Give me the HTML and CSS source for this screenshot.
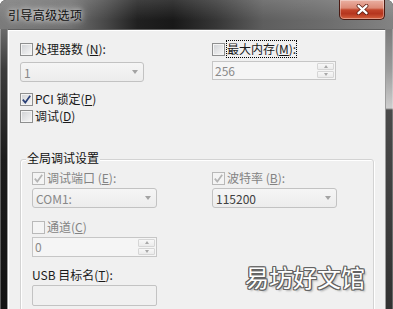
FILE: index.html
```html
<!DOCTYPE html>
<html lang="zh">
<head>
    <meta charset="utf-8">
    <title>引导高级选项</title>
    <link rel="stylesheet" href="styles.css">
</head>
<body>

<div class="window">
    <div class="titlebar">
        <span class="title">引导高级选项</span>
        <div class="close">
            <svg width="13" height="11" viewBox="0 0 13 11">
                <path d="M2.5 1.8 L10.5 9.2 M10.5 1.8 L2.5 9.2" stroke="#5a1c10" stroke-width="3.8" stroke-linecap="round"/>
                <path d="M2.5 1.8 L10.5 9.2 M10.5 1.8 L2.5 9.2" stroke="#fff" stroke-width="2.3" stroke-linecap="round"/>
            </svg>
        </div>
    </div>

    <div class="frame">
        <div class="edge edge-left"></div>

        <div class="client">
            <div class="cols cols-top">
                <div class="col">
                    <div class="check"><span class="box"></span><span>处理器数 (<u>N</u>):</span></div>
                    <div class="combo combo-first"><span>1</span><i class="arrow"></i></div>
                    <div class="check row-pci">
                        <span class="box">
                            <svg width="11" height="11" viewBox="0 0 11 11"><path d="M1.8 5.6 L4.3 8.6 L9.2 1.8" fill="none" stroke="#2b4177" stroke-width="1.7"/></svg>
                        </span>
                        <span>PCI 锁定(<u>P</u>)</span>
                    </div>
                    <div class="check row-debug"><span class="box"></span><span>调试(<u>D</u>)</span></div>
                </div>
                <div class="col">
                    <div class="check"><span class="box"></span><span class="focus">最大内存(<u>M</u>):</span></div>
                    <div class="spin spin-first">
                        <span class="val">256</span>
                        <span class="spin-btns"><b><i class="up"></i></b><b><i class="down"></i></b></span>
                    </div>
                </div>
            </div>

            <div class="group">
                <span class="legend">全局调试设置</span>
                <div class="cols cols-group">
                    <div class="col">
                        <div class="check disabled">
                            <span class="box">
                                <svg width="11" height="11" viewBox="0 0 11 11"><path d="M1.8 5.6 L4.3 8.6 L9.2 1.8" fill="none" stroke="#b4b4b4" stroke-width="1.7"/></svg>
                            </span>
                            <span>调试端口 (<u>E</u>):</span>
                        </div>
                        <div class="combo combo-group"><span>COM1:</span><i class="arrow"></i></div>
                        <div class="check disabled row-chan"><span class="box"></span><span>通道(<u>C</u>)</span></div>
                        <div class="spin spin-group">
                            <span class="val">0</span>
                            <span class="spin-btns"><b><i class="up"></i></b><b><i class="down"></i></b></span>
                        </div>
                        <div class="label row-usb">USB 目标名(<u>T</u>):</div>
                        <div class="textbox"></div>
                    </div>
                    <div class="col">
                        <div class="check disabled">
                            <span class="box">
                                <svg width="11" height="11" viewBox="0 0 11 11"><path d="M1.8 5.6 L4.3 8.6 L9.2 1.8" fill="none" stroke="#b4b4b4" stroke-width="1.7"/></svg>
                            </span>
                            <span>波特率 (<u>B</u>):</span>
                        </div>
                        <div class="combo combo-group combo-dark"><span>115200</span><i class="arrow"></i></div>
                    </div>
                </div>
            </div>
        </div>

        <div class="edge edge-right"></div>
    </div>

    <div class="watermark">易坊好文馆</div>
</div>

</body>
</html>
```

FILE: styles.css
```css
body {
    margin: 0;
    background: #fff;
}
.window {
    position: relative;
    width: 393px;
    height: 309px;
    overflow: hidden;
    display: flex;
    flex-direction: column;
    border-radius: 6px 6px 0 0;
    background: #2a2a2a;
    font-family: "Noto Sans CJK SC", sans-serif;
    font-size: 12px;
    color: #1a1a1a;
}
.titlebar {
    height: 29px;
    flex: none;
    display: flex;
    justify-content: space-between;
    align-items: flex-start;
    background:
        linear-gradient(180deg, rgba(255,255,255,.14), rgba(255,255,255,0) 70%),
        linear-gradient(90deg, #7b7b7b 0%, #6d6d6d 18%, #474747 27%, #202020 35%, #181818 44%, #363636 55%, #5e5e5e 67%, #6e6e6e 84%, #838383 100%);
}
.title {
    margin: 7px 0 0 8px;
    line-height: 16px;
    letter-spacing: 0.4px;
    color: #111;
    text-shadow: 0 0 5px rgba(255,255,255,.85), 0 0 10px rgba(255,255,255,.6), 0 0 14px rgba(255,255,255,.4);
}
.close {
    width: 46px;
    height: 20px;
    margin-right: 8px;
    box-sizing: border-box;
    border: 1px solid #4a1a12;
    border-top: none;
    border-radius: 0 0 5px 5px;
    display: flex;
    align-items: center;
    justify-content: center;
    background: linear-gradient(180deg, #eab0a2 0%, #dc8a76 42%, #c2452b 52%, #b5351e 72%, #d5623f 100%);
    box-shadow: inset 0 0 0 1px rgba(255,255,255,.35);
}
.frame {
    flex: 1;
    display: flex;
}
.edge {
    width: 7px;
    flex: none;
}
.edge-left {
    background: linear-gradient(180deg, #6a6a6a 0, #3c3c3c 40px, #1c1c1c 130px, #111 100%);
    box-shadow: inset 1px 0 0 rgba(255,255,255,.3);
}
.edge-right {
    background: linear-gradient(180deg, #7a7a7a 0, #9a9a9a 40px, #cdcdcd 79px, #4a4a4a 81px, #2e2e2e 100%);
    box-shadow: inset -1px 0 0 rgba(255,255,255,.25);
}
.client {
    flex: 1;
    background: #f0f0f0;
    border: 1px solid #9c9c9c;
    border-top-color: #5e5e5e;
    border-bottom: none;
    box-shadow: inset 1px 1px 0 #fff;
    padding: 11px 0 0 12px;
}
.cols {
    display: grid;
}
.cols-top {
    grid-template-columns: 192px 1fr;
}
.cols-group {
    grid-template-columns: 180px 1fr;
}
.col {
    display: flex;
    flex-direction: column;
    align-items: flex-start;
}
.check {
    display: flex;
    align-items: center;
    gap: 2px;
    height: 16px;
    line-height: 16px;
}
.box {
    width: 13px;
    height: 13px;
    flex: none;
    box-sizing: border-box;
    border: 1px solid #8e8f8f;
    background: linear-gradient(135deg, #cfd1d4, #f8f8f8);
    box-shadow: inset 0 0 0 1px #f4f4f4;
    display: flex;
    align-items: center;
    justify-content: center;
}
.disabled {
    color: #838383;
}
.disabled .box {
    border-color: #b9b9b9;
    background: #f4f4f4;
    box-shadow: none;
}
.focus {
    outline: 1px dotted #000;
}
.row-pci {
    margin-top: 9px;
}
.row-debug {
    margin-top: 1px;
}
.combo {
    width: 124px;
    height: 20px;
    box-sizing: border-box;
    border: 1px solid #c2c2c2;
    border-radius: 3px;
    background: linear-gradient(180deg, #f5f5f5, #ececec);
    display: flex;
    align-items: center;
    justify-content: space-between;
    padding: 0 5px 0 3px;
    color: #888;
}
.combo-first {
    margin-top: 5px;
}
.combo-group {
    width: 125px;
    margin-top: 2px;
}
.combo-dark {
    color: #404040;
}
.arrow {
    width: 0;
    height: 0;
    border-left: 3.5px solid transparent;
    border-right: 3.5px solid transparent;
    border-top: 4px solid #a3a3a3;
}
.spin {
    width: 124px;
    height: 19px;
    box-sizing: border-box;
    border: 1px solid #c6c6c6;
    background: #f5f5f5;
    display: flex;
    color: #8a8a8a;
}
.spin-first {
    margin-top: 4px;
}
.spin-group {
    width: 125px;
    height: 20px;
    margin-top: 2px;
}
.val {
    flex: 1;
    line-height: 17px;
    padding-left: 2px;
}
.spin-btns {
    width: 17px;
    display: flex;
    flex-direction: column;
    padding: 1px;
    gap: 1px;
}
.spin-btns b {
    flex: 1;
    display: flex;
    align-items: center;
    justify-content: center;
    border: 1px solid #d6d6d6;
    border-radius: 1px;
    background: linear-gradient(180deg, #f8f8f8, #ebebeb);
}
.up, .down {
    width: 0;
    height: 0;
    border-left: 2.5px solid transparent;
    border-right: 2.5px solid transparent;
}
.up {
    border-bottom: 3px solid #a8a8a8;
}
.down {
    border-top: 3px solid #a8a8a8;
}
.group {
    position: relative;
    margin: 35px 11px 0 0;
    border: 1px solid #d3d3d3;
    border-radius: 3px;
    box-shadow: inset 1px 1px 0 #fff, 1px 1px 0 #fff;
    padding: 10px 0 30px 11px;
}
.legend {
    position: absolute;
    top: -10px;
    left: 5px;
    padding: 0 1px;
    line-height: 16px;
    background: #f0f0f0;
    color: #111;
}
.row-chan {
    margin-top: 11px;
}
.label {
    height: 16px;
    line-height: 16px;
}
.row-usb {
    margin-top: 10px;
}
.textbox {
    width: 125px;
    height: 21px;
    margin-top: 2px;
    box-sizing: border-box;
    border: 1px solid #c3c3c3;
    border-radius: 2px;
    background: #f0f0f0;
}
.watermark {
    position: absolute;
    left: 245px;
    top: 263px;
    font-size: 24px;
    line-height: 28px;
    font-weight: 400;
    color: #fff;
    text-shadow:
        1px 0 #626262, -1px 0 #626262, 0 1px #626262, 0 -1px #626262,
        1px 1px #626262, -1px -1px #626262, 1px -1px #626262, -1px 1px #626262,
        2px 2px 2px rgba(0,0,0,.3);
}
```
